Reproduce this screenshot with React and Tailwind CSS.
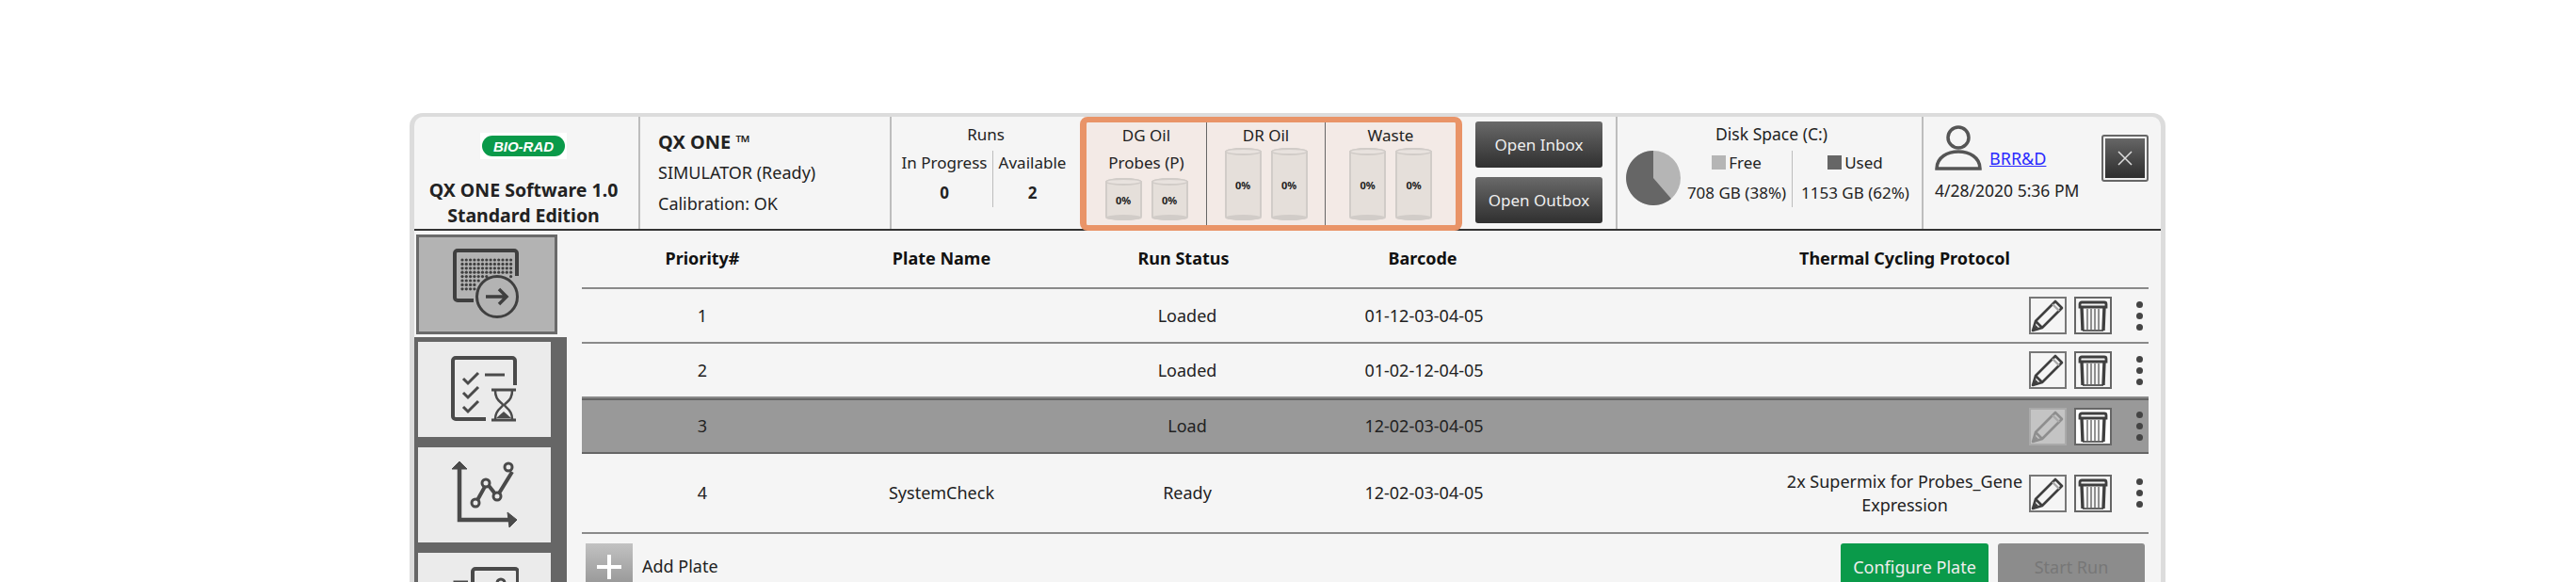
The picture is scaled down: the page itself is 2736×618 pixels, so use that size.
import React from 'react'

const font = { fontFamily: '"Noto Sans", sans-serif' }

const rows = [
  { n: '1', name: '', status: 'Loaded', barcode: '01-12-03-04-05', protocol: '', h: 'h-[58px]' },
  { n: '2', name: '', status: 'Loaded', barcode: '01-02-12-04-05', protocol: '', h: 'h-[58px]' },
  { n: '3', name: '', status: 'Load', barcode: '12-02-03-04-05', protocol: '', h: 'h-[59px]', selected: true },
  { n: '4', name: 'SystemCheck', status: 'Ready', barcode: '12-02-03-04-05', protocol: '2x Supermix for Probes_Gene Expression', h: 'h-[85px]' },
]

const dots = []
for (let r = 0; r < 8; r++) {
  for (let c = 0; c < 13; c++) {
    const x = 10 + c * 4.3
    const y = 12 + r * 4.4
    if (Math.hypot(x - 47, y - 51) > 24) dots.push([x, y])
  }
}

function PlateIcon() {
  return (
    <svg width="72" height="76" viewBox="0 0 72 76" fill="none" stroke="#3f3f3f">
      <path d="M22 55H5a3 3 0 0 1-3-3V5a3 3 0 0 1 3-3h60a3 3 0 0 1 3 3v24" strokeWidth="4" />
      {dots.map(([x, y]) => <circle key={x + '-' + y} cx={x} cy={y} r="1.6" fill="#3f3f3f" stroke="none" />)}
      <circle cx="47" cy="51" r="21.5" strokeWidth="3" />
      <path d="M35 51h22M49 43l8 8-8 8" strokeWidth="3.5" />
    </svg>
  )
}

function QueueIcon() {
  return (
    <svg width="72" height="72" viewBox="0 0 72 72" fill="none" stroke="#4a4a4a">
      <path d="M37 67H5a3 3 0 0 1-3-3V5a3 3 0 0 1 3-3h60a3 3 0 0 1 3 3v26" strokeWidth="4" />
      <path d="M13 24l5 5 11-11M13 39l5 5 11-11M13 54l5 5 11-11" strokeWidth="3" />
      <path d="M36 20h21" strokeWidth="3" />
      <path d="M43 36h26M43 68h26" strokeWidth="3" />
      <path d="M47 37c0 12 8 12 8 15s-8 4-8 15M65 37c0 12-8 12-8 15s8 4 8 15" strokeWidth="2.5" />
      <path d="M48 66l8-7 8 7z" fill="#4a4a4a" stroke="none" />
    </svg>
  )
}

function ChartIcon() {
  return (
    <svg width="72" height="72" viewBox="0 0 72 72" fill="none" stroke="#4a4a4a">
      <path d="M9 8v54h56" strokeWidth="4.5" />
      <path d="M1 8l8-8 8 8z" fill="#4a4a4a" stroke="#4a4a4a" strokeWidth="1" />
      <path d="M60 54l10 8-8 8z" fill="#4a4a4a" stroke="#4a4a4a" strokeWidth="1" />
      <path d="M27 43l11-20 11 14 16-26" strokeWidth="4" />
      <circle cx="26" cy="44" r="4" fill="#ebebeb" strokeWidth="3" />
      <circle cx="37" cy="23" r="4" fill="#ebebeb" strokeWidth="3" />
      <circle cx="49" cy="37" r="4" fill="#ebebeb" strokeWidth="3" />
      <circle cx="61" cy="6" r="4" fill="#ebebeb" strokeWidth="3" />
    </svg>
  )
}

function ReportIcon() {
  return (
    <svg width="72" height="72" viewBox="0 0 72 72" fill="none" stroke="#4a4a4a">
      <path d="M23 30V5a3 3 0 0 1 3-3h42a3 3 0 0 1 3 3v50" strokeWidth="4" />
      <path d="M18 16H4v40h14" strokeWidth="3" />
      <circle cx="53" cy="17" r="4" strokeWidth="3" />
    </svg>
  )
}

function Pencil({ muted }) {
  const c = muted ? '#8e8e8e' : '#3f3f3f'
  return (
    <svg width="36" height="36" viewBox="0 0 36 36" fill="none" stroke={c} strokeWidth="2.6">
      <path d="M2 34l3-10L26 3l7 7-21 21z" strokeLinejoin="round" />
      <path d="M5 24l7 7" />
      <path d="M3 33l2-5 3 3z" fill={c} stroke="none" />
      <path d="M23 6l7 7" stroke="#aaa" strokeWidth="2.4" />
    </svg>
  )
}

function Trash() {
  return (
    <svg width="36" height="36" viewBox="0 0 36 36" fill="none" stroke="#3f3f3f">
      <path d="M4 9V6a2 2 0 0 1 2-2h24a2 2 0 0 1 2 2v3z" strokeWidth="2.8" />
      <path d="M6 9l1 25M30 9l-1 25" strokeWidth="3.4" />
      <path d="M12 11v22M16 11v22M20 11v22M24 11v22" strokeWidth="1.4" stroke="#666" />
      <path d="M7 34h22" strokeWidth="1.6" />
    </svg>
  )
}

function Cylinder({ tall }) {
  return (
    <div className={`relative flex w-[39px] items-center justify-center rounded-[19px/4px] border-2 border-[#d1ccc8] bg-[#e5dfda] ${tall ? 'h-[77px]' : 'h-[45px]'}`}>
      <div className="absolute inset-x-[-2px] top-[-2px] h-[8px] rounded-[50%] border-2 border-[#d1ccc8] bg-[#e8e2de]" />
      <div className="absolute inset-x-[-2px] bottom-[-2px] h-[6px] rounded-[50%] bg-[#d1ccc8]" />
      <span className="mt-1 text-[11px] font-bold text-[#222]">0%</span>
    </div>
  )
}

function Tab({ children, active, h }) {
  if (active) {
    return (
      <div className={`flex w-[150px] items-center justify-center border-[3px] border-[#6a6a6a] bg-[#b3b3b3] ${h}`}>{children}</div>
    )
  }
  return <div className={`flex w-[141px] items-center justify-center bg-[#ebebeb] ${h}`}>{children}</div>
}

function Row({ row }) {
  const bg = row.selected
    ? 'bg-[#999999] border-y-[2px] border-y-[#666666]'
    : 'border-b-2 border-b-[#8a8a8a]'
  return (
    <div className={`grid grid-cols-[256px_252px_262px_246px_264px_250px_134px] items-center text-[18px] text-[#222] ${row.h} ${bg}`}>
      <div className="text-center">{row.n}</div>
      <div className="text-center">{row.name}</div>
      <div className="pl-[8px] text-center">{row.status}</div>
      <div className="pl-[3px] text-center">{row.barcode}</div>
      <div />
      <div className="mx-[-4px] text-center leading-[25px]">{row.protocol}</div>
      <div className="flex items-center pl-[7px]">
        <div className={`flex h-[40px] w-[40px] items-center justify-center border-2 ${row.selected ? 'border-[#aaa] bg-[#c4c4c4]' : 'border-[#777] bg-[#f5f5f5]'}`}>
          <Pencil muted={row.selected} />
        </div>
        <div className={`ml-[8px] flex h-[40px] w-[40px] items-center justify-center border-2 border-[#666] ${row.selected ? 'bg-white' : 'bg-[#f5f5f5]'}`}>
          <Trash />
        </div>
        <div className="ml-[26px] flex flex-col gap-[5px]">
          <div className="h-[7px] w-[7px] rounded-full bg-[#444]" />
          <div className="h-[7px] w-[7px] rounded-full bg-[#444]" />
          <div className="h-[7px] w-[7px] rounded-full bg-[#444]" />
        </div>
      </div>
    </div>
  )
}

export default function App() {
  return (
    <div className="h-[618px] w-[2736px] overflow-hidden bg-white pl-[435px] pt-[120px]" style={font}>
      <div className="h-[640px] w-[1865px] rounded-t-[14px] border-x-[5px] border-t-[4px] border-[#dcdcdc] bg-[#f5f5f5] text-[17px] text-[#222]">
        {/* Header */}
        <div className="flex h-[121px] border-b-[2px] border-b-[#333]">
          <div className="flex w-[238px] flex-col items-center pr-[6px] pt-[17px] text-[19.5px] font-bold leading-[27px]">
            <div className="mb-[19px] bg-white px-[2px] py-[3px]">
              <div className="flex h-[22px] w-[88px] items-center justify-center rounded-full bg-[#0a9a4a] font-['Liberation_Sans'] text-[15px] italic leading-none text-white">BIO-RAD</div>
            </div>
            <div className="whitespace-nowrap">QX ONE Software 1.0</div>
            <div>Standard Edition</div>
          </div>
          <div className="flex w-[267px] flex-col gap-[8px] border-l-2 border-l-[#bdbdbd] pl-[19px] pt-[14px] text-[18px] leading-[25px]">
            <div className="text-[20px] font-bold">QX ONE ™</div>
            <div>SIMULATOR (Ready)</div>
            <div>Calibration: OK</div>
          </div>
          <div className="flex w-[202px] flex-col items-center border-l-2 border-l-[#bdbdbd] pt-[6px]">
            <div className="leading-[25px]">Runs</div>
            <div className="mr-[4px] mt-[5px] flex h-[60px]">
              <div className="flex w-[102px] flex-col items-center gap-[7px] leading-[25px]">
                <div>In Progress</div>
                <div className="font-bold">0</div>
              </div>
              <div className="flex w-[84px] flex-col items-center gap-[7px] border-l border-l-[#bdbdbd] leading-[25px]">
                <div>Available</div>
                <div className="font-bold">2</div>
              </div>
            </div>
          </div>
          {/* Consumables */}
          <div className="flex h-[121px] w-[406px] rounded-[8px] border-x-[7px] border-y-[6px] border-[#e99468] bg-[#f3eae6] text-[#222]">
            <div className="flex w-[128px] flex-col items-center border-r border-r-[#666]">
              <div className="mt-[1px] leading-[25px]">DG Oil</div>
              <div className="mt-[4px] leading-[25px]">Probes (P)</div>
              <div className="mt-[4px] flex gap-[10px]"><Cylinder /><Cylinder /></div>
            </div>
            <div className="flex w-[126px] flex-col items-center border-r border-r-[#666]">
              <div className="mt-[1px] leading-[25px]">DR Oil</div>
              <div className="mt-[1px] flex gap-[10px]"><Cylinder tall /><Cylinder tall /></div>
            </div>
            <div className="flex flex-1 flex-col items-center">
              <div className="mt-[1px] leading-[25px]">Waste</div>
              <div className="mt-[1px] flex gap-[10px]"><Cylinder tall /><Cylinder tall /></div>
            </div>
          </div>
          <div className="flex w-[163px] flex-col gap-[10px] pl-[14px] pt-[5px]">
            <button className="h-[49px] w-[135px] rounded-[3px] bg-gradient-to-b from-[#6a6a6a] to-[#303030] text-[17px] text-[#eee]">Open Inbox</button>
            <button className="h-[49px] w-[135px] rounded-[3px] bg-gradient-to-b from-[#6a6a6a] to-[#303030] text-[17px] text-[#eee]">Open Outbox</button>
          </div>
          <div className="flex w-[325px] border-l-2 border-l-[#bdbdbd] pl-[8px]">
            <svg width="60" height="60" viewBox="0 0 60 60" className="mt-[35px] shrink-0">
              <circle cx="30" cy="30" r="29" fill="#b5b5b5" />
              <path d="M30 30V1A29 29 0 1 0 49 52z" fill="#666666" />
            </svg>
            <div className="flex flex-1 flex-col pt-[6px]">
              <div className="pr-[64px] text-center text-[17.5px] leading-[25px]">Disk Space (C:)</div>
              <div className="mt-[5px] flex h-[60px]">
                <div className="flex w-[117px] flex-col items-center gap-[7px] leading-[25px]">
                  <div className="flex items-center gap-[3px]"><span className="h-[15px] w-[15px] bg-[#b5b5b5]" />Free</div>
                  <div className="whitespace-nowrap">708 GB (38%)</div>
                </div>
                <div className="flex w-[134px] flex-col items-center gap-[7px] border-l border-l-[#bdbdbd] leading-[25px]">
                  <div className="flex items-center gap-[3px]"><span className="h-[15px] w-[15px] bg-[#666666]" />Used</div>
                  <div className="whitespace-nowrap">1153 GB (62%)</div>
                </div>
              </div>
            </div>
          </div>
          <div className="flex flex-1 border-l-2 border-l-[#bdbdbd] pl-[12px]">
            <div className="flex w-[177px] flex-col pt-[9px]">
              <div className="flex items-end gap-[8px]">
                <svg width="50" height="48" viewBox="0 0 50 48" fill="none" stroke="#555" strokeWidth="3.5">
                  <circle cx="25" cy="13" r="11" />
                  <path d="M2 46c0-24 46-24 46 0z" />
                </svg>
                <a href="#" className="text-[18px] leading-[25px] text-[#2a2aff] underline">BRR&amp;D</a>
              </div>
              <div className="mt-[9px] whitespace-nowrap text-[17.5px] leading-[25px]">4/28/2020 5:36 PM</div>
            </div>
            <div className="mt-[19px] h-[50px] w-[50px] rounded-[3px] border-[2px] border-[#666] bg-[#eee] p-[2px]">
              <div className="flex h-full w-full items-center justify-center bg-gradient-to-b from-[#666] to-[#2e2e2e]">
                <svg width="20" height="20" viewBox="0 0 20 20" stroke="#ddd" strokeWidth="1.5"><path d="M3 3l14 14M17 3L3 17" /></svg>
              </div>
            </div>
          </div>
        </div>

        <div className="flex">
          {/* Sidebar */}
          <div className="relative h-[400px] w-[178px] shrink-0">
            <div className="absolute left-0 top-[113px] h-[300px] w-[162px] bg-[#666666]" />
            <div className="relative flex flex-col items-start">
              <div className="pl-[2px] pt-[4px]"><Tab active h="h-[106px]"><PlateIcon /></Tab></div>
              <div className="flex flex-col gap-[11px] pl-[4px] pt-[8px]">
                <Tab h="h-[101px]"><QueueIcon /></Tab>
                <Tab h="h-[101px]"><ChartIcon /></Tab>
                <Tab h="h-[101px]"><ReportIcon /></Tab>
              </div>
            </div>
          </div>
          {/* Table */}
          <div className="w-[1664px]">
            <div className="grid h-[62px] grid-cols-[256px_252px_262px_246px_264px_250px_134px] items-center border-b-2 border-b-[#8a8a8a] pb-[1px] text-[18px] font-bold text-[#111]">
              <div className="text-center">Priority#</div>
              <div className="text-center">Plate Name</div>
              <div className="text-center">Run Status</div>
              <div className="text-center">Barcode</div>
              <div />
              <div className="flex justify-center whitespace-nowrap">Thermal Cycling Protocol</div>
            </div>
            {rows.map((row) => <Row key={row.n} row={row} />)}
            <div className="flex items-start pt-[10px]">
              <div className="ml-[4px] flex h-[50px] w-[50px] items-center justify-center bg-gradient-to-b from-[#c2c2c2] to-[#929292]">
                <svg width="28" height="28" viewBox="0 0 28 28" stroke="#fff" strokeWidth="4"><path d="M14 1v26M1 14h26" /></svg>
              </div>
              <div className="ml-[10px] mt-[12px] text-[18px] leading-[25px]">Add Plate</div>
              <button className="ml-auto h-[50px] w-[157px] rounded-[3px] bg-[#0a9a4a] text-[18px] text-[#eee]">Configure Plate</button>
              <button className="ml-[10px] mr-[4px] h-[50px] w-[156px] rounded-[3px] bg-[#8c8c8c] text-[18px] text-[#777]">Start Run</button>
            </div>
          </div>
        </div>
      </div>
    </div>
  )
}
